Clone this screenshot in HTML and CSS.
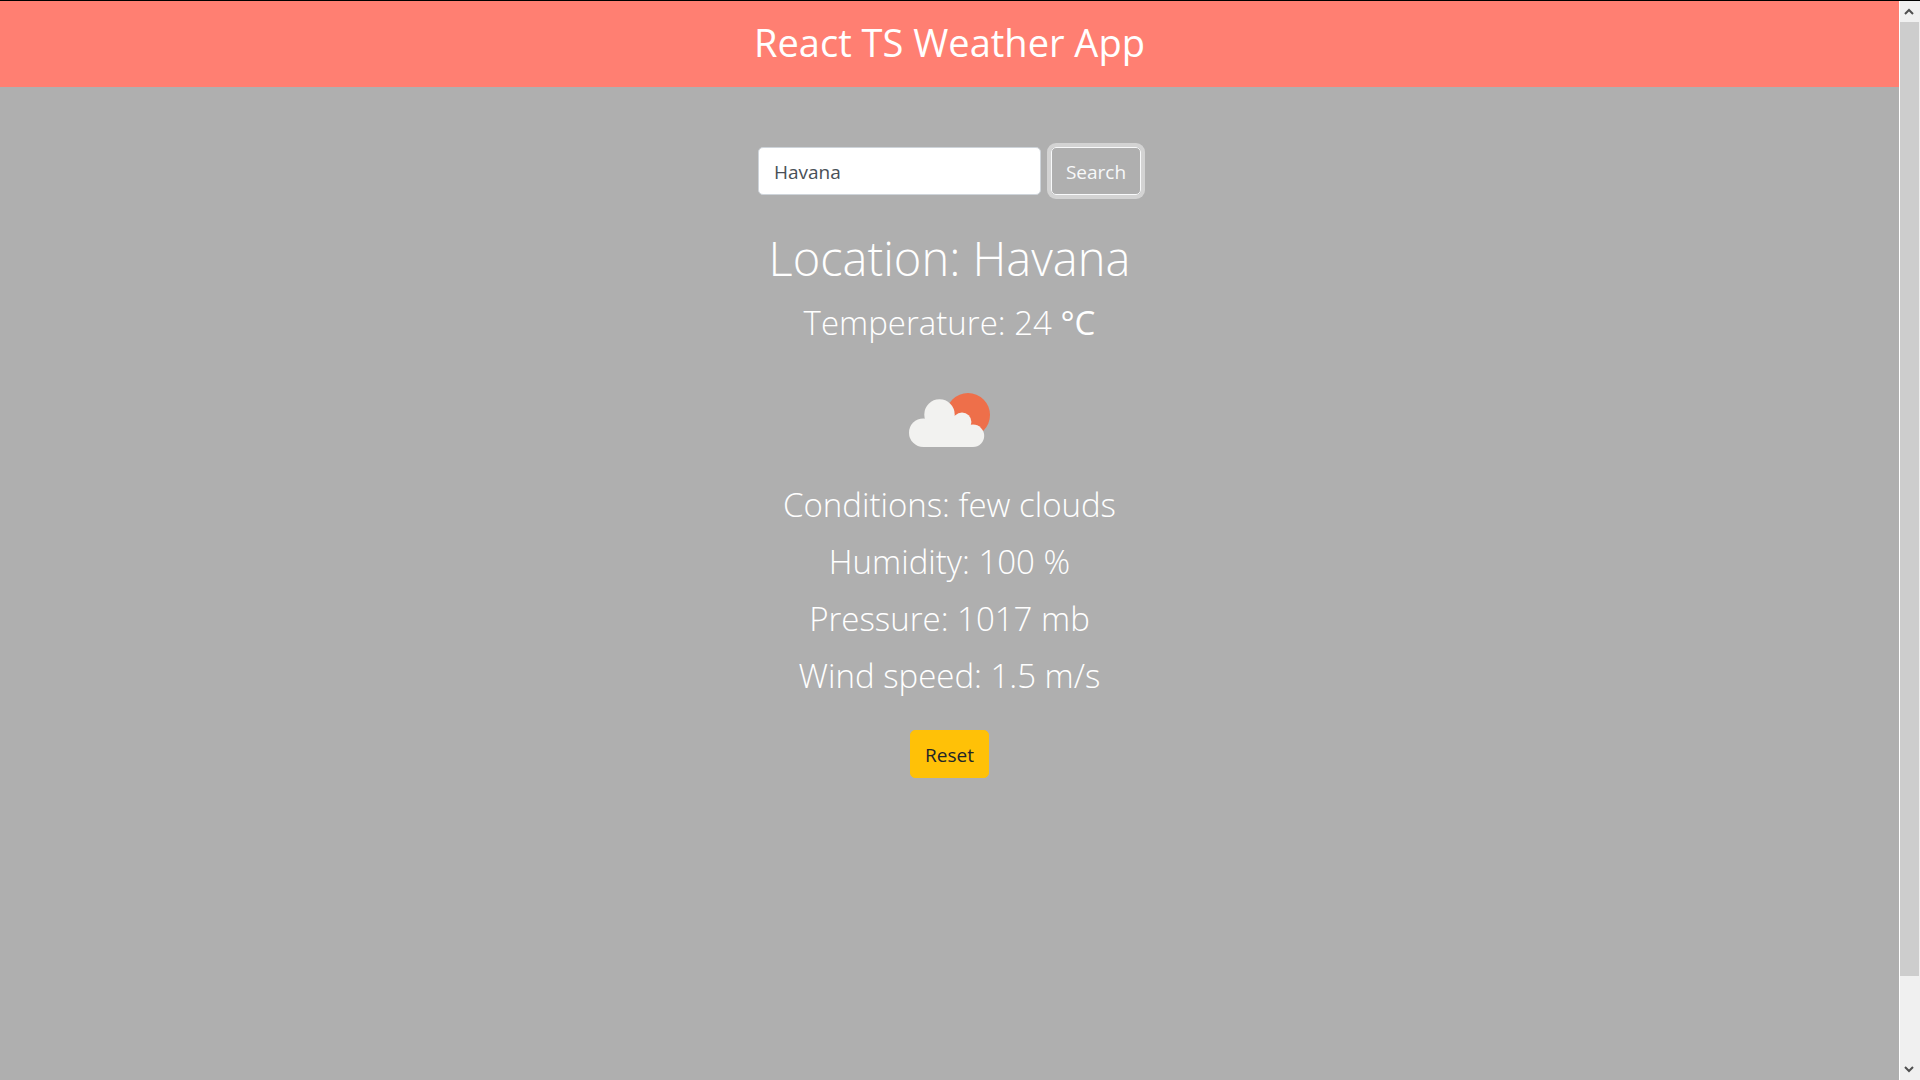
FILE: index.html
```html
<!DOCTYPE html>
<html lang="en">
<head>
  <meta charset="utf-8">
  <title>React TS Weather App</title>
  <link rel="stylesheet" href="styles.css">
</head>
<body>
  <div class="page">
    <header class="header">
      <h1 class="title">React TS Weather App</h1>
    </header>
    <main class="content">
      <form class="search">
        <input class="search-input" type="text" value="Havana" aria-label="City">
        <button class="btn btn-search" type="button">Search</button>
      </form>
      <section class="weather">
        <h2 class="location">Location: Havana</h2>
        <p class="fact">Temperature: 24 <span class="unit">°C</span></p>
        <svg class="weather-icon" width="126" height="126" viewBox="0 0 126 126" role="img" aria-label="few clouds">
          <circle cx="82" cy="67" r="22" fill="#ee6f4a"/>
          <g fill="#f2f2f0">
            <circle cx="37.300" cy="84.700" r="14.300"/>
            <circle cx="53.500" cy="66.500" r="15.200"/>
            <circle cx="76" cy="74" r="9.400"/>
            <circle cx="87" cy="87.800" r="11.200"/>
            <path d="M37.300 99V80l3-13h27l10 7 7 5 2.700 20z"/>
          </g>
        </svg>
        <div class="facts">
          <p class="fact">Conditions: few clouds</p>
          <p class="fact">Humidity: 100 %</p>
          <p class="fact">Pressure: 1017 mb</p>
          <p class="fact">Wind speed: 1.5 m/s</p>
        </div>
      </section>
      <button class="btn btn-reset" type="button">Reset</button>
    </main>
  </div>
  <div class="scrollbar" aria-hidden="true">
    <svg class="arrow" width="18" height="21" viewBox="0 0 18 21"><path d="M5 13l4-4 4 4" /></svg>
    <div class="thumb"></div>
    <div class="track"></div>
    <svg class="arrow" width="18" height="21" viewBox="0 0 18 21"><path d="M5 8l4 4 4-4" /></svg>
  </div>
</body>
</html>
```
FILE: styles.css
```css
* {
  box-sizing: border-box;
}

body {
  margin: 0;
  min-height: 100vh;
  display: flex;
  border-top: 1px solid #000;
  background: #afafaf;
  color: #fff;
  font-family: "Open Sans", "Noto Sans", sans-serif;
}

h1, h2, p {
  margin: 0;
}

.page {
  flex: 1;
}

.header {
  padding: 16px 16px 20px;
  background: #ff7f72;
  text-align: center;
}

.title {
  font-size: 38px;
  line-height: 50px;
  font-weight: 400;
}

.content {
  display: flex;
  flex-direction: column;
  align-items: center;
  padding: 60px 16px;
}

.search {
  display: flex;
  gap: 10px;
}

.search-input {
  width: 283px;
  height: 48px;
  padding: 1px 15px 0;
  border: 1px solid #ced4da;
  border-radius: 5px;
  background: #fff;
  color: #495057;
  font: 400 19px/28px "Open Sans", "Noto Sans", sans-serif;
}

.btn {
  height: 48px;
  padding: 1px 14px 0;
  border: 1px solid;
  border-radius: 5px;
  font: 400 19px/28px "Open Sans", "Noto Sans", sans-serif;
}

.btn-search {
  border-color: #f8f9fa;
  background: transparent;
  color: #f8f9fa;
  box-shadow: 0 0 0 4px #d3d3d3;
}

.btn-reset {
  margin-top: 32px;
  border-color: #ffc107;
  background: #ffc107;
  color: #212529;
}

.weather {
  display: flex;
  flex-direction: column;
  align-items: center;
  margin-top: 33px;
  text-align: center;
}

.location {
  margin-bottom: 13px;
  font-size: 47px;
  line-height: 60px;
  font-weight: 300;
}

.fact {
  font-size: 33px;
  line-height: 44px;
  font-weight: 300;
}

.unit {
  font-weight: 400;
}

.weather-icon {
  margin: 3px 0 9px;
}

.facts {
  display: grid;
  gap: 13px;
}

.scrollbar {
  display: flex;
  flex-direction: column;
  width: 21px;
  border-left: 1px solid #fff;
  border-right: 1px solid #f0f0f0;
  background: #f0f0f0;
}

.arrow {
  flex: none;
  fill: none;
  stroke: #505050;
  stroke-width: 2;
}

.thumb {
  flex: 92;
  background: #cdcdcd;
}

.track {
  flex: 8;
}
```
